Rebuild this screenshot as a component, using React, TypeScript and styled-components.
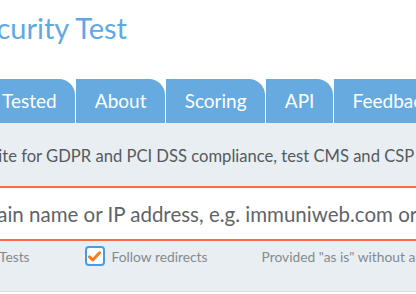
import styled, { createGlobalStyle } from "styled-components"

const Global = createGlobalStyle`
  html, body {
    margin: 0;
    padding: 0;
    background: #ffffff;
    overflow: hidden;
  }
  body {
    font-family: Lato, "Open Sans", sans-serif;
  }
`

const Page = styled.div`
  width: 416px;
  height: 294px;
  overflow: hidden;
`

const Header = styled.div`
  height: 79px;
  display: flex;
  justify-content: flex-end;
  width: 127px;
`

const Title = styled.h1`
  margin: 11px 0 0 0;
  font-size: 29px;
  font-weight: 400;
  color: #5fa9e2;
  white-space: nowrap;
  line-height: 34px;
`

const Tabs = styled.nav<{ $shift: number }>`
  display: flex;
  gap: 1px;
  height: 44px;
  margin-left: ${(p) => p.$shift}px;
`

const Tab = styled.div`
  flex: none;
  padding: 0 18.6px;
  background: #66aae0;
  color: #ffffff;
  font-size: 19px;
  line-height: 44px;
  border-top-right-radius: 16px;
  white-space: nowrap;
`

const Band = styled.div`
  background: #e8eef2;
  height: 63px;
  display: flex;
  align-items: center;
  white-space: nowrap;
  border-bottom: 2px solid #fb6a44;
`

const Intro = styled.p<{ $shift: number }>`
  margin: 2px 0 0 ${(p) => p.$shift}px;
  font-size: 16.6px;
  color: #555a5e;
`

const Field = styled.div`
  height: 51px;
  display: flex;
  align-items: center;
  white-space: nowrap;
  border-bottom: 2px solid #fb6a44;
`

const Placeholder = styled.span<{ $shift: number }>`
  margin-left: ${(p) => p.$shift}px;
  font-size: 20.5px;
  color: #5f6468;
`

const Options = styled.div`
  background: #e8eef2;
  height: 51px;
  border-bottom: 1px solid #d9dfe3;
  display: flex;
  align-items: flex-start;
  padding-top: 4px;
  box-sizing: border-box;
  white-space: nowrap;
  font-size: 13.8px;
  color: #858a8e;
`

const Option = styled.div<{ $x: number }>`
  display: flex;
  align-items: center;
  gap: 7px;
  height: 22px;
  margin-left: ${(p) => p.$x}px;
`

const Box = styled.span`
  width: 20px;
  height: 20px;
  box-sizing: border-box;
  border: 2px solid #4a9be0;
  border-radius: 4px;
  background: #ffffff;
  display: flex;
  align-items: center;
  justify-content: center;
`

const Check = () => (
  <svg width="13" height="11" viewBox="0 0 13 11">
    <path d="M1.5 5.8 L4.8 9 L11.5 1.8" fill="none" stroke="#f47c20" strokeWidth="3" strokeLinecap="round" strokeLinejoin="round" />
  </svg>
)

export default function App() {
  return (
    <Page>
      <Global />
      <Header>
        <Title>Website Security Test</Title>
      </Header>
      <Tabs $shift={-64}>
        <Tab>Most Tested</Tab>
        <Tab>About</Tab>
        <Tab>Scoring</Tab>
        <Tab>API</Tab>
        <Tab>Feedback</Tab>
      </Tabs>
      <Band>
        <Intro $shift={-110}>Test your website for GDPR and PCI DSS compliance, test CMS and CSP security</Intro>
      </Band>
      <Field>
        <Placeholder $shift={-96}>Enter domain name or IP address, e.g. immuniweb.com or 8.8.8.8</Placeholder>
      </Field>
      <Options>
        <Option $x={-41}>Public Tests</Option>
        <Option $x={55}>
          <Box>
            <Check />
          </Box>
          Follow redirects
        </Option>
        <Option $x={54}>Provided "as is" without any warranty</Option>
      </Options>
    </Page>
  )
}
